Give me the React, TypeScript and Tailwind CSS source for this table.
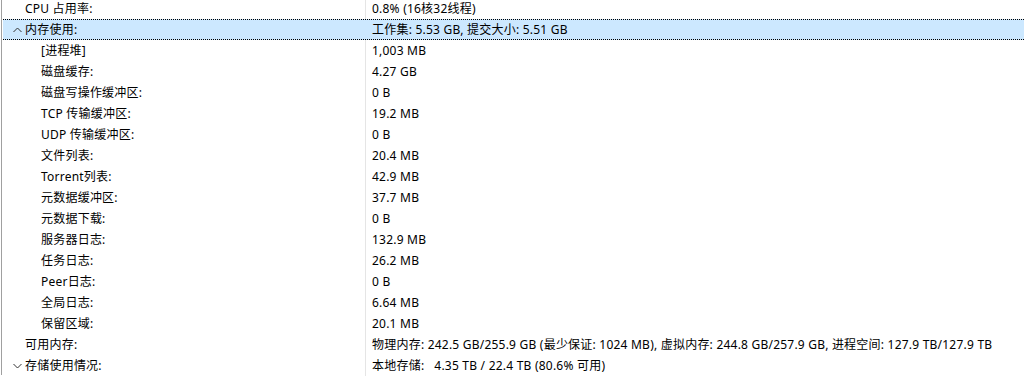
type Row = {
  label: string;
  value: string;
  level: number;
  chevron?: "up" | "down";
  selected?: boolean;
};

const rows: Row[] = [
  { label: "CPU 占用率:", value: "0.8% (16核32线程)", level: 0 },
  { label: "内存使用:", value: "工作集: 5.53 GB, 提交大小: 5.51 GB", level: 0, chevron: "up", selected: true },
  { label: "[进程堆]", value: "1,003 MB", level: 1 },
  { label: "磁盘缓存:", value: "4.27 GB", level: 1 },
  { label: "磁盘写操作缓冲区:", value: "0 B", level: 1 },
  { label: "TCP 传输缓冲区:", value: "19.2 MB", level: 1 },
  { label: "UDP 传输缓冲区:", value: "0 B", level: 1 },
  { label: "文件列表:", value: "20.4 MB", level: 1 },
  { label: "Torrent列表:", value: "42.9 MB", level: 1 },
  { label: "元数据缓冲区:", value: "37.7 MB", level: 1 },
  { label: "元数据下载:", value: "0 B", level: 1 },
  { label: "服务器日志:", value: "132.9 MB", level: 1 },
  { label: "任务日志:", value: "26.2 MB", level: 1 },
  { label: "Peer日志:", value: "0 B", level: 1 },
  { label: "全局日志:", value: "6.64 MB", level: 1 },
  { label: "保留区域:", value: "20.1 MB", level: 1 },
  {
    label: "可用内存:",
    value:
      "物理内存: 242.5 GB/255.9 GB (最少保证: 1024 MB), 虚拟内存: 244.8 GB/257.9 GB, 进程空间: 127.9 TB/127.9 TB",
    level: 0,
  },
  { label: "存储使用情况:", value: "本地存储:\u00a0\u00a0 4.35 TB / 22.4 TB (80.6% 可用)", level: 0, chevron: "down" },
];

function Chevron({ dir }: { dir: "up" | "down" }) {
  return (
    <svg width="9" height="5" viewBox="0 0 9 5" className="absolute left-[10px] top-1/2 -translate-y-1/2">
      {dir === "up" ? (
        <path d="M0.5 4.5 L4.5 0.5 L8.5 4.5" fill="none" stroke="#333" strokeWidth="1" />
      ) : (
        <path d="M0.5 0.5 L4.5 4.5 L8.5 0.5" fill="none" stroke="#333" strokeWidth="1" />
      )}
    </svg>
  );
}

export default function App() {
  return (
    <div
      className="w-[1024px] h-[377px] overflow-hidden bg-white text-[12px] text-black tracking-[0.22px]"
      style={{ fontFamily: '"Noto Sans", "Noto Sans CJK SC", sans-serif' }}
    >
      <div className="ml-px h-full border-l border-[#a0a0a0] pl-px">
        <div className="-mt-[2px]">
          {rows.map((r) => (
            <div
              key={r.label}
              className={
                r.selected
                  ? "flex h-[21px] items-center whitespace-nowrap bg-[#cce8ff] border-y border-dotted border-black"
                  : "flex h-[21px] items-center whitespace-nowrap"
              }
            >
              <div
                className={
                  r.selected
                    ? "relative h-full w-[363px] flex items-center"
                    : "relative h-full w-[363px] flex items-center border-r border-[#e5e5e5]"
                }
              >
                {r.chevron && <Chevron dir={r.chevron} />}
                <span className={r.level === 0 ? "pl-[22px]" : "pl-[38px]"}>{r.label}</span>
              </div>
              <div className="pl-[6px]">{r.value}</div>
            </div>
          ))}
        </div>
      </div>
    </div>
  );
}
